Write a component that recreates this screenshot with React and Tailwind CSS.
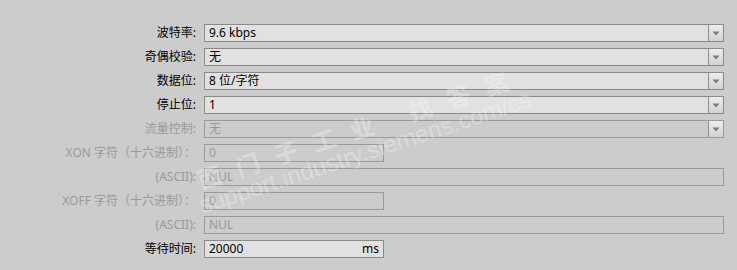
import React from 'react';

const FONT = { fontFamily: '"Noto Sans", "Noto Sans CJK SC", sans-serif' };

const rows = [
    { label: '波特率:', value: '9.6 kbps', kind: 'select' },
    { label: '奇偶校验:', value: '无', kind: 'select' },
    { label: '数据位:', value: '8 位/字符', kind: 'select' },
    { label: '停止位:', value: '1', kind: 'select' },
    { label: '流量控制:', value: '无', kind: 'select', disabled: true },
    { label: 'XON 字符（十六进制）：', value: '0', kind: 'short', disabled: true },
    { label: '(ASCII):', value: 'NUL', kind: 'long', disabled: true },
    { label: 'XOFF 字符（十六进制）：', value: '0', kind: 'short', disabled: true },
    { label: '(ASCII):', value: 'NUL', kind: 'long', disabled: true },
    { label: '等待时间:', value: '20000', kind: 'short', unit: 'ms' },
];

function DropButton() {
    return (
        <div className="w-[15px] h-full border-l border-[#8c8c8c] bg-gradient-to-b from-[#ececec] to-[#d2d2d2] flex items-center justify-center">
            <svg width="8" height="5" viewBox="0 0 8 5">
                <path d="M0.5 0.5 L7.5 0.5 L4 4.5 Z" fill="#7c7c7c" />
            </svg>
        </div>
    );
}

function Field({ row }) {
    const box = row.disabled
        ? 'border-[#9a9a9a] bg-[#cccccc] text-[#9a9a9a]'
        : 'border-[#8a8a8a] bg-[#e1e1e1] text-black';
    const width = row.kind === 'short' ? 'w-[180px]' : 'w-[520px]';
    return (
        <div className={`${width} h-[18px] border ${box} flex items-stretch`}>
            <div className="flex-1 pl-[4px] pr-[4px] leading-[16px] text-[12px] flex justify-between">
                <span>{row.value}</span>
                {row.unit && <span>{row.unit}</span>}
            </div>
            {row.kind === 'select' && <DropButton />}
        </div>
    );
}

export default function App() {
    return (
        <div className="w-[737px] h-[270px] bg-[#cccccc] relative overflow-hidden" style={FONT}>
            <div className="pt-[24px] flex flex-col gap-[6px]">
                {rows.map((row, i) => (
                    <div key={i} className="flex items-center h-[18px]">
                        <div className={`w-[196px] text-right text-[12px] leading-[16px] ${row.disabled ? 'text-[#9a9a9a]' : 'text-black'}`}>
                            {row.label}
                        </div>
                        <div className="ml-[8px]">
                            <Field row={row} />
                        </div>
                    </div>
                ))}
            </div>

            {/* watermark */}
            <div className="absolute left-[194px] top-[168px] origin-top-left -rotate-[18deg] pointer-events-none select-none text-white/30 whitespace-nowrap">
                <div className="text-[24px] leading-[26px] tracking-[16px] font-bold" style={{ fontFamily: '"Noto Sans CJK SC", sans-serif' }}>
                    西门子工业 找答案
                </div>
                <div className="text-[24px] leading-[24px] -ml-[6px]" style={{ fontFamily: '"Liberation Sans", sans-serif' }}>
                    support.industry.siemens.com/cs
                </div>
            </div>
        </div>
    );
}
